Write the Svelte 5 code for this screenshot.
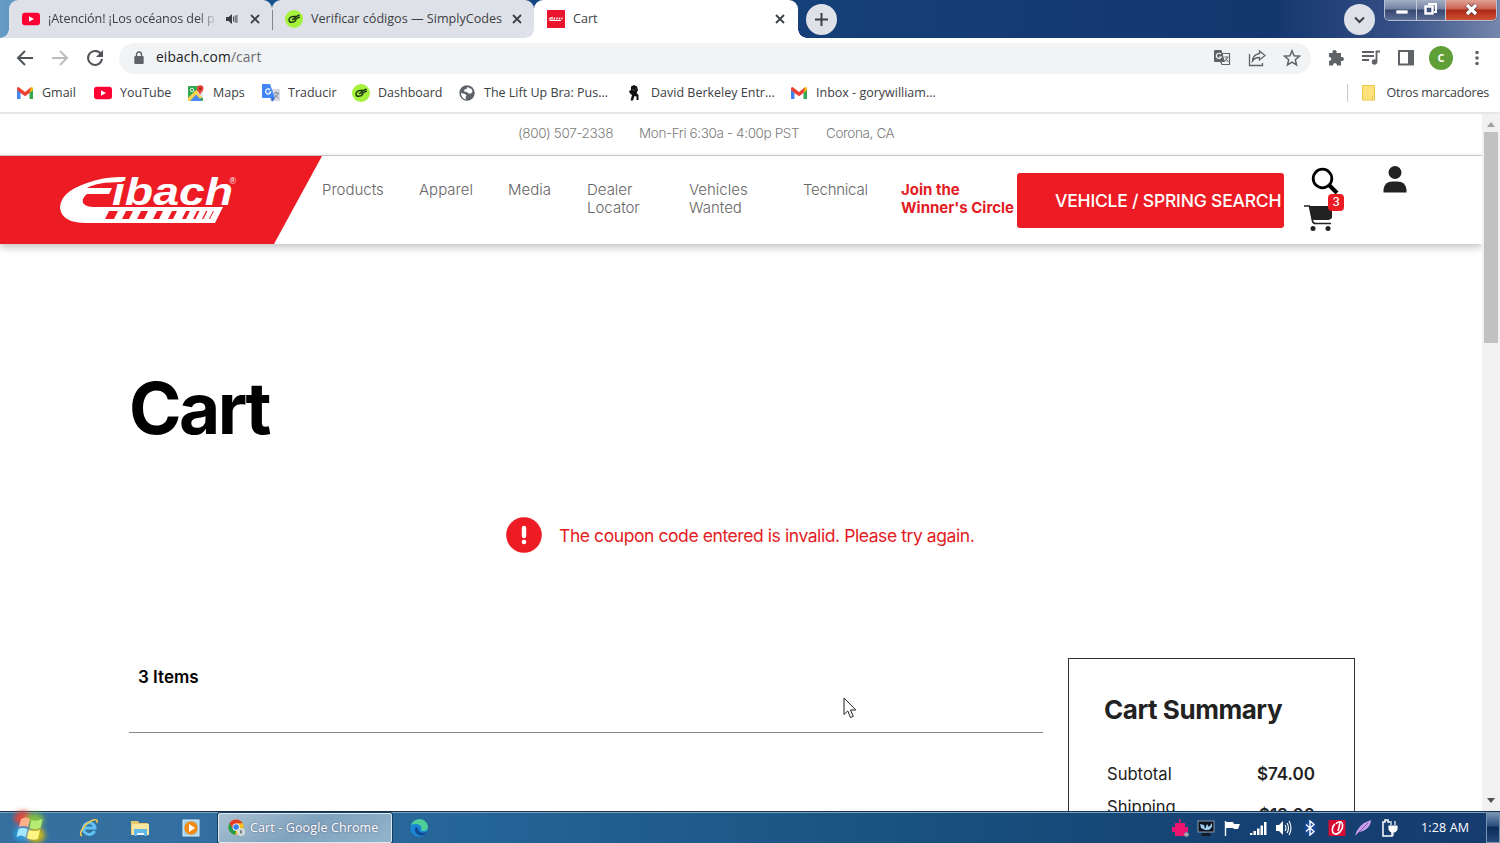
<script>
  const bookmarks = [
    { icon: 'gmail', label: 'Gmail' },
    { icon: 'youtube', label: 'YouTube' },
    { icon: 'maps', label: 'Maps' },
    { icon: 'translate', label: 'Traducir' },
    { icon: 'codes', label: 'Dashboard' },
    { icon: 'globe', label: 'The Lift Up Bra: Pus...' },
    { icon: 'figure', label: 'David Berkeley Entr...' },
    { icon: 'gmail', label: 'Inbox - gorywilliam...' },
  ];

  const navItems = [
    ['Products'],
    ['Apparel'],
    ['Media'],
    ['Dealer', 'Locator'],
    ['Vehicles', 'Wanted'],
    ['Technical'],
    ['Join the', "Winner's Circle"],
  ];

  const totals = [
    { label: 'Subtotal', value: '$74.00' },
    { label: 'Shipping', value: '$18.00' },
  ];
</script>

{#snippet siteIcon(name)}
  <svg class="site-icon" viewBox="0 0 18 18">
    {#if name === 'gmail'}
      <path d="M1 4.5V15h3.5V8z" fill="#4285f4" />
      <path d="M17 4.5V15h-3.500V8z" fill="#34a853" />
      <path d="M13.500 4.500 15 3.200q2-.6 2 1.500V6l-3.500 3z" fill="#fbbc04" />
      <path d="M1 4.700q0-2.100 2-1.500L9 8l6-4.800-1.500 5.800L9 12.300 4.500 9 1 6z" fill="#ea4335" />
    {:else if name === 'youtube'}
      <rect x="0" y="2.700" width="18" height="12.600" rx="3" fill="#f03" />
      <path d="m7 6.200 5 2.800-5 2.800z" fill="#fff" />
    {:else if name === 'maps'}
      <rect x="1" y="2" width="15" height="15" rx="1" fill="#34a853" />
      <path d="m1 14 8-8 7 4v2l-5 5H1z" fill="#fbd34d" />
      <path d="m3 17 6-6.500 6 6.500z" fill="#4a89f3" />
      <path d="m10.500 9 5.500 5.500V6z" fill="#e3e6ea" />
      <circle cx="5" cy="6" r="1.700" fill="none" stroke="#d9f0df" />
      <path d="M13 11c-1-3-3-4-3-6.500a3.200 3.200 0 0 1 6.500 0C16.500 7 14 8 13 11z" fill="#ea4335" />
      <circle cx="13.200" cy="4.500" r="1.200" fill="#8c2b24" />
    {:else if name === 'translate'}
      <rect x="8" y="5" width="10" height="12" fill="#d8dce2" />
      <path d="M0 0h8l5 14H1q-1 0-1-1z" fill="#4285f4" />
      <path d="m9 14 4 0-3 4z" fill="#3367d6" />
      <path d="M8.200 5.800A2.600 2.600 0 1 0 8.800 8H6.500" fill="none" stroke="#fff" stroke-width="1.200" />
      <path d="M12 9h5m-2.500-1.500V9m2 0q-1 3-4 4.500m.5-3 3.500 4" fill="none" stroke="#7b8696" />
    {:else if name === 'codes'}
      <circle cx="9" cy="9" r="9" fill="#a5f23d" />
      <path d="M10.500 6.500C6 6 3.800 8 4 10.300c.3 2.600 4.600 2.600 6.300.5 1-1.200.7-2-.8-2L7.500 9.500M9.500 7.500l4.700-2.300m-2.700 3.500 3-1.500" fill="none" stroke="#1e3311" stroke-width="1.400" stroke-linecap="round" />
    {:else if name === 'globe'}
      <circle cx="9" cy="9" r="7.700" fill="#5f6368" />
      <path d="M9.500 3 8.500 5l-2 .5L6 7.500l3 .5 1.500 1.500H13l1.500-2-1-2.500zM2.800 9l4.200 1 1.500 1.500-1 1.500.5 2.500Q3.500 14.500 2.800 9z" fill="#fff" />
    {:else if name === 'figure'}
      <path d="M6 2.500 9 1l3 1.500 1 3.500-1.500 3 2 2V16h-2v-3.500L9.500 12 8 16.500H5.500L7 11 5 9.500 4 7l2-1z" fill="#111" />
      <path d="m7.500 5.500 2 1m1-2 .8.500" stroke="#888" stroke-width=".8" />
    {/if}
  </svg>
{/snippet}

{#snippet closeIcon()}
  <svg class="close" viewBox="0 0 12 12"><path d="m2 2 8 8M10 2l-8 8" /></svg>
{/snippet}

<div class="desktop">
  <div class="tabstrip">
    <div class="tab first">
      {@render siteIcon('youtube')}
      <span class="title fade">¡Atención! ¡Los océanos del p</span>
      <svg class="audio" viewBox="0 0 12 12"><path d="M0 4h2.500L6 1v10L2.500 8H0z" fill="#3c4043" /><path d="M7.500 3.500v5M9.200 2.500v7M10.900 2v8" stroke="#3c4043" stroke-width=".9" /></svg>
      {@render closeIcon()}
    </div>
    <div class="tab second">
      {@render siteIcon('codes')}
      <span class="title">Verificar códigos — SimplyCodes</span>
      {@render closeIcon()}
    </div>
    <div class="tab active">
      <svg class="site-icon" viewBox="0 0 18 18">
        <rect width="18" height="18" fill="#e8152c" />
        <path d="M2 9.500q1-2 4-2.200M3.500 9h3m-4 1.500H14m-7-1 1-2m1.500 2 .5-1.500h1m1 1.500.5-1.500h1m1 1.500 1-2" fill="none" stroke="#fff" stroke-width="1.100" />
      </svg>
      <span class="title">Cart</span>
      {@render closeIcon()}
    </div>
    <div class="round-btn"><svg viewBox="0 0 31 31"><path d="M15.500 9v13M9 15.500h13" /></svg></div>
    <div class="round-btn search-tabs"><svg viewBox="0 0 31 31"><path d="m11 13.500 4.500 4.500 4.500-4.500" /></svg></div>
    <div class="window-controls">
      <div class="ctl"><svg viewBox="0 0 30 20"><rect x="10" y="10" width="12" height="4" fill="#fff" stroke="#54617f" stroke-width=".8" /></svg></div>
      <div class="ctl mid"><svg viewBox="0 0 26 20"><path d="M10 4h8v8h-2" fill="none" stroke="#fff" stroke-width="2" /><rect x="7.500" y="6.500" width="7" height="7" fill="#40507c" stroke="#fff" stroke-width="2.400" /></svg></div>
      <div class="ctl quit"><svg viewBox="0 0 50 20"><path d="m21 5 9 9m0-9-9 9" stroke="#5d3a40" stroke-width="4.800" /><path d="m21 5 9 9m0-9-9 9" stroke="#fff" stroke-width="3.200" /></svg></div>
    </div>
  </div>

  <div class="toolbar">
    <svg class="nav-icon" viewBox="0 0 18 18"><path d="M17 9H2.500M9 2 2 9l7 7" /></svg>
    <svg class="nav-icon off" viewBox="0 0 18 18"><path d="M1 9h14.500M9 2l7 7-7 7" /></svg>
    <svg class="nav-icon" viewBox="0 0 18 18"><path d="M15 5.200A7 7 0 1 0 16 9.800" /><path d="M17 1v7h-7z" class="solid" /></svg>
    <div class="omnibox">
      <svg class="lock" viewBox="0 0 10 14"><rect x=".3" y="5" width="9.400" height="8" rx="1" fill="#5f6368" /><path d="M2.500 5.500V3.500a2.500 2.500 0 0 1 5 0v2" fill="none" stroke="#5f6368" stroke-width="1.400" /></svg>
      <span class="url">eibach.com<em>/cart</em></span>
      <svg class="box-icon" viewBox="0 0 18 18"><path d="M8 4.500h8.500v11H9L7.500 12.500" stroke-width="1.200" /><path d="M2 1h6.500L12 13H2q-1 0-1-1V2q0-1 1-1z" class="solid" /><path d="M8 5.200A2.600 2.600 0 1 0 8.300 8H6" class="cut" /><path d="M11.500 8h4m-1 0q-.5 2.500-2.500 4.500m.500-3 3 3.500" stroke-width="1" /></svg>
      <svg class="box-icon" viewBox="0 0 18 18"><path d="M1.500 5v11.500h13V14" stroke-width="1.300" /><path d="m11.500 2 5.500 4.500-5.500 4.500V8.500Q7 8.500 4.500 12q.5-6.500 7-7.500z" stroke-width="1.300" /></svg>
      <svg class="box-icon" viewBox="0 0 18 18"><path d="m9 1.800 2.100 4.900 5.200.5-4 3.500 1.200 5.200L9 13.200l-4.500 2.700 1.200-5.200-4-3.500 5.200-.5z" stroke-width="1.500" /></svg>
    </div>
    <div class="actions">
      <svg viewBox="0 0 18 18"><path d="M2 4h3.500Q5 1 7.500 1T9.500 4H14v4q3-.500 3 2t-3 2v4.500h-4q0-2.500-2-2.500t-2 2.500H2V12q2.300 0 2.300-2T2 8z" fill="#5f6368" /></svg>
      <svg viewBox="0 0 18 18"><path d="M0 3h12M0 7h12M0 11h7M14.500 13V2.500H18" fill="none" stroke="#5f6368" stroke-width="1.800" /><circle cx="12.500" cy="13" r="2.700" fill="#5f6368" /></svg>
      <svg viewBox="0 0 18 18"><rect x="2" y="2" width="14" height="13.500" fill="none" stroke="#5f6368" stroke-width="2" /><path d="M11 2h5v13h-5z" fill="#5f6368" /></svg>
      <div class="avatar">c</div>
      <svg viewBox="0 0 18 18" fill="#5f6368"><circle cx="9" cy="3.500" r="1.800" /><circle cx="9" cy="9" r="1.800" /><circle cx="9" cy="14.500" r="1.800" /></svg>
    </div>
  </div>

  <div class="bookmarks">
    <div class="marks">
      {#each bookmarks as mark}
        <div class="mark">
          {@render siteIcon(mark.icon)}
          <span>{mark.label}</span>
        </div>
      {/each}
    </div>
    <div class="other">
      <svg viewBox="0 0 14 16"><path d="M.500.500h12V15H.500z" fill="#ffe27c" stroke="#eec649" /><path d="M10.500 11h2v4h-2z" fill="#fff0b0" stroke="#eec649" /></svg>
      <span>Otros marcadores</span>
    </div>
  </div>

  <div class="viewport">
    <div class="page">
      <div class="contact">
        <span class="phone">(800) 507-2338</span>
        <span class="hours">Mon-Fri 6:30a - 4:00p PST</span>
        <span class="city">Corona, CA</span>
      </div>

      <header>
        <div class="brand">
          <svg viewBox="0 0 180 50">
            <path d="M66 1Q46 0 28 7 1 16 1 32q2 15 26 15h129l8-16H34q-12-1-10-8 1-3 4-5h22l3-6H28Q38 6 63 6z" fill="#fff" />
            <g fill="#ed1c24">
              <path d="M50 35h9l-4 8h-9zM67 35h7l-4 8h-7zM82 35h7l-4 8h-7zM98 35h6l-4 8h-6zM113 35h5l-4 8h-5zM127 35h4l-4 8h-4zM138 35h2.500l-4 8h-2.500zM147 35h1.500l-4 8h-1.500zM154 35h1l-4 8h-1z" />
            </g>
            <text class="wordmark" x="53" y="28.500" textLength="121" lengthAdjust="spacingAndGlyphs">ibach</text>
            <text class="reg" x="170.500" y="7.500">®</text>
          </svg>
        </div>
        <nav>
          {#each navItems as lines}
            <div class="nav-item">
              {#each lines as line}<span>{line}</span>{/each}
            </div>
          {/each}
        </nav>
        <div class="spring-search"><span>VEHICLE / SPRING SEARCH</span></div>
        <div class="tools">
          <svg class="magnifier" viewBox="0 0 28 28"><circle cx="11.500" cy="11.500" r="9.300" fill="none" stroke="#000" stroke-width="2.800" /><path d="m18 18 8 8" stroke="#000" stroke-width="4" /></svg>
          <div class="cart-icon">
            <svg viewBox="0 0 30 28"><path d="M0 2h5.500l3 15q.5 2.500 3 2.500H27" fill="none" stroke="#222" stroke-width="1.600" /><path d="M5 2h23v12l-3 2H8z" fill="#222" /><circle cx="9" cy="24.500" r="2.500" fill="#222" /><circle cx="24" cy="24.500" r="2.500" fill="#222" /></svg>
            <span class="badge">3</span>
          </div>
        </div>
        <svg class="user" viewBox="0 0 24 28"><circle cx="12" cy="7.500" r="6.500" fill="#222" /><path d="M.5 27.500v-3q1-8 9-8h5q8 0 9 8v3z" fill="#222" /></svg>
      </header>

      <main>
        <h1>Cart</h1>
        <div class="alert">
          <svg viewBox="0 0 36 36"><circle cx="18" cy="18" r="17.800" fill="#ed1c24" /><path d="M18 11v8" stroke="#fff" stroke-width="4.400" stroke-linecap="round" /><circle cx="18" cy="25" r="2.300" fill="#fff" /></svg>
          <span>The coupon code entered is invalid. Please try again.</span>
        </div>
        <div class="columns">
          <section class="items"><span>3 Items</span></section>
          <aside>
            <h2>Cart Summary</h2>
            {#each totals as row}
              <div class="row"><span>{row.label}</span><strong>{row.value}</strong></div>
            {/each}
          </aside>
        </div>
      </main>
    </div>
    <div class="scrollbar">
      <div class="arrow up"></div>
      <div class="thumb"></div>
      <div class="arrow down"></div>
    </div>
  </div>

  <div class="taskbar">
    <svg class="start" viewBox="0 0 40 32">
      <defs>
        <filter id="glow" x="-50%" y="-50%" width="200%" height="200%"><feGaussianBlur stdDeviation="2.500" /></filter>
        <filter id="soft"><feGaussianBlur stdDeviation=".600" /></filter>
      </defs>
      <g filter="url(#glow)">
        <ellipse cx="15" cy="6" rx="9" ry="7" fill="#e0483c" /><ellipse cx="27" cy="8" rx="9" ry="7" fill="#7fbd45" />
        <ellipse cx="14" cy="22" rx="8" ry="7" fill="#2fa0df" /><ellipse cx="28" cy="23" rx="9" ry="8" fill="#c8b51f" />
      </g>
      <g filter="url(#soft)">
        <path d="m13 7q5-3 9 0l-2 8q-5-2-9 0z" fill="#ffb18c" /><path d="m23.500 8q4 2 11-1l-2 9q-6 2-11 0z" fill="#b4ec75" />
        <path d="m10.500 17q4-2 9 0l-2 8q-5-3-9 0z" fill="#a4e8ff" /><path d="m21 18q5 2 11 0l-2 9q-6 2-11-1z" fill="#fff584" />
      </g>
    </svg>
    <svg class="pin" viewBox="0 0 20 20"><path d="M15.500 13A5.800 5.800 0 1 1 16 10H6" fill="none" stroke="#62c2f6" stroke-width="3" /><path d="M3 18C-1 17 4 7 12 3c4-2 7-2 6 2" fill="none" stroke="#f1ca4b" stroke-width="1.600" /></svg>
    <svg class="pin" viewBox="0 0 20 20"><path d="M1 3h7l1 2h9v12H1z" fill="#e6c86c" /><path d="M2 6h17v11H2z" fill="#fae79f" /><path d="M4 11h13v7h-3v-3H7v3H4z" fill="#62b9e7" /><path d="M7 15h7v2H7z" fill="#e9f7ff" /></svg>
    <svg class="pin" viewBox="0 0 20 20"><rect x="2" y="2" width="16" height="16" fill="#a7d3ef" stroke="#d7edf9" /><circle cx="10" cy="10" r="6.700" fill="#f28a13" /><path d="m8 6 6 4-6 4z" fill="#fff" /></svg>
    <div class="task">
      <svg viewBox="0 0 20 20">
        <circle cx="9" cy="9" r="8.500" fill="#fbc116" /><path d="M1.600 4.800A8.500 8.500 0 0 1 16.400 4.800H9L5 11z" fill="#e33b2e" /><path d="M1.600 4.800 5.500 11 9 13l-1 4.500A8.500 8.500 0 0 1 1.600 4.800z" fill="#219b4c" />
        <circle cx="9" cy="9" r="4" fill="#fff" /><circle cx="9" cy="9" r="3.100" fill="#347ff0" /><circle cx="14.500" cy="14.500" r="4.500" fill="#d3dadb" /><path d="M14.500 12.500v3.500" stroke="#617277" stroke-width="1.800" />
      </svg>
      <span>Cart - Google Chrome</span>
    </div>
    <svg class="edge" viewBox="0 0 20 20"><circle cx="10" cy="10" r="8.800" fill="#1b86d3" /><path d="M2 7C5-1 18-1 19 9c0 5-7 5-7 2 2-3-3-7-10-4z" fill="#4fcf96" /><path d="M7 9c-3 4 1 10 8 8q2-1 3-3c-5 2-9 0-9-4z" fill="#124a96" /></svg>
    <div class="tray">
      <svg viewBox="0 0 18 18"><path d="M8 0h1.500v4H14v4h3v5h-3v4H4v-4H1V8h3V4h4z" fill="#ed146f" /><circle cx="15.500" cy="15.500" r="2.300" fill="#a5a2a8" /></svg>
      <svg viewBox="0 0 18 18"><rect x="1" y="2" width="16" height="11" fill="#0b1320" stroke="#8b99a8" /><path d="m3 5 4 1 1 4 2-5 2 3 3-4v4l-3 3H8L4 9z" fill="#9fcdeb" /><path d="M5 14h8l1 3H4z" fill="#121c27" /></svg>
      <svg viewBox="0 0 18 18"><path d="M2.500 2v15" stroke="#fff" stroke-width="1.400" /><path d="M3 3h7l1 2h6l-2 5h-4l-1-1H3z" fill="#fff" /></svg>
      <svg viewBox="0 0 18 18" fill="#fff"><path d="M1 14h2.500v2H1zM4.500 12H7v4H4.500zM8 9.500h2.500V16H8zM11.500 6.500H14V16h-2.500zM15 3h2.500v13H15z" /></svg>
      <svg viewBox="0 0 18 18"><path d="M1 6h3l4-4v14l-4-4H1z" fill="#fff" /><path d="M10 6q2 3 0 6m2-8q3 5 0 10m2-12q4 7 0 14" fill="none" stroke="#fff" stroke-width="1.100" /></svg>
      <svg viewBox="0 0 18 18"><ellipse cx="9" cy="9" rx="5.500" ry="8" fill="#164a9f" /><path d="m5 5.500 8 7-4 3.500V2l4 3.500-8 7" fill="none" stroke="#fff" stroke-width="1.400" /></svg>
      <svg viewBox="0 0 18 18"><rect x=".5" y="1" width="17" height="16" fill="#d80b32" /><path d="M7 5C4 7 3 14 7 15c5 1 9-7 7-11-1-2-5-1-6 1m4-1c-1 3-1 5-2 8" fill="none" stroke="#fff" stroke-width="1.600" /></svg>
      <svg viewBox="0 0 18 18"><path d="M1 17Q4 5 17 1q0 6-6 10-4 2-6 2l-4 4z" fill="#c7a0e8" /><path d="M2 16 14 4" stroke="#8055b6" /></svg>
      <svg viewBox="0 0 18 18"><path d="M10 3H8V1H5v2H3v14h9v-4" fill="none" stroke="#fff" stroke-width="1.500" /><path d="M11 2v4m4-4v4M9 7h8v3q-1 3-4 3t-4-3zM13 13v4" fill="#fff" stroke="#fff" stroke-width="1.200" /></svg>
    </div>
    <span class="clock">1:28 AM</span>
    <div class="show-desktop"></div>
  </div>

  <svg class="cursor" viewBox="0 0 14 22"><path d="M1 1v16.500l3.800-3.600L7.500 20.500l2.800-1.200-2.800-6.300h5.300z" fill="#fff" stroke="#222" stroke-width="1" /></svg>
</div>

<style>
  :global(body) { margin: 0; overflow: hidden; background: #fff; }
  .desktop { position: relative; width: 1500px; height: 843px; display: flex; flex-direction: column; overflow: hidden; font-family: "Open Sans", "Noto Sans", sans-serif; font-size: 12.5px; color: #3c4043; }
  svg { display: block; flex: none; }
  .site-icon { width: 18px; height: 18px; }

  .tabstrip { height: 38px; flex: none; display: flex; align-items: center; background: linear-gradient(90deg, #659bc5 0, #17528e 18%, #153f78 55%, #14366f 85%, #344f85 93%, #7587ad 100%); }
  .tab { height: 38px; box-sizing: border-box; display: flex; align-items: center; background: #dee1e8; border-radius: 9px 9px 0 0; white-space: nowrap; position: relative; }
  .first { width: 263px; margin-left: 9px; padding-left: 13px; }
  .first::before { content: ''; position: absolute; left: -9px; bottom: 0; width: 9px; height: 9px; background: radial-gradient(circle at 0 0, transparent 8.500px, #dee1e8 9px); }
  .first::after { content: ''; position: absolute; right: -1px; top: 10px; width: 1px; height: 20px; background: #80868b; z-index: 1; }
  .second { width: 262px; padding-left: 13px; }
  .active { width: 264px; padding-left: 13px; background: #fff; }
  .active::before, .active::after { content: ''; position: absolute; bottom: 0; width: 9px; height: 9px; }
  .active::before { left: -9px; background: radial-gradient(circle at 0 0, transparent 8.500px, #fff 9px); }
  .active::after { right: -9px; background: radial-gradient(circle at 100% 0, transparent 8.500px, #fff 9px); }
  .title { margin-left: 8px; line-height: 18px; font-size: 12.600px; }
  .fade { width: 170px; overflow: hidden; letter-spacing: -.1px; mask-image: linear-gradient(90deg, #000 88%, transparent); }
  .audio { width: 12px; height: 12px; margin-left: 8px; }
  .close { width: 12px; height: 12px; margin-left: auto; margin-right: 11px; }
  .active .close { margin-right: 12px; }
  .close path { stroke: #3c4043; stroke-width: 1.8; }
  .round-btn { width: 31px; height: 31px; border-radius: 50%; background: #dee1e8; margin-left: 8px; }
  .round-btn path { fill: none; stroke: #3c4043; stroke-width: 2; }
  .search-tabs { margin-left: auto; }
  .window-controls { height: 20px; align-self: flex-start; margin: 0 3px 0 9px; display: flex; border: 1px solid #b6c0d4; border-top: 0; border-radius: 0 0 5px 5px; overflow: hidden; box-shadow: 0 0 1px #0a1b3e; }
  .ctl { width: 31px; background: linear-gradient(#a4aec4, #7482a3 45%, #35466f 50%, #5d6e95); }
  .ctl svg { height: 20px; margin: 0 auto; }
  .mid { width: 28px; border: solid #c2cad9; border-width: 0 1px; }
  .quit { width: 50px; background: linear-gradient(#dfa195, #c96252 45%, #ac2814 50%, #cf5031); }

  .toolbar { height: 40px; flex: none; display: flex; align-items: center; padding-left: 16px; background: #fff; }
  .nav-icon { width: 18px; height: 18px; margin-right: 17px; }
  .nav-icon path { fill: none; stroke: #505357; stroke-width: 2; }
  .nav-icon .solid { fill: #505357; stroke: none; }
  .nav-icon.off path { stroke: #bbbdc0; }
  .omnibox { width: 1192px; height: 31px; box-sizing: border-box; border-radius: 16px; background: #f1f3f4; display: flex; align-items: center; padding: 0 10px 0 15px; margin-left: -2px; }
  .lock { width: 10px; height: 14px; }
  .url { font-size: 13.8px; line-height: 18px; padding-bottom: 2px; letter-spacing: .12px; color: #202124; margin: 0 auto 0 12px; }
  .url em { font-style: normal; color: #686c70; }
  .box-icon { width: 18px; height: 18px; margin-left: 17px; }
  .box-icon path { fill: none; stroke: #5f6368; }
  .box-icon .solid { fill: #5f6368; stroke: none; }
  .box-icon .cut { stroke: #f1f3f4; stroke-width: 1.200; }
  .actions { display: flex; align-items: center; gap: 17px; margin-left: 16px; }
  .actions svg { width: 18px; height: 18px; }
  .avatar { width: 24px; height: 24px; margin: 0 -3px; border-radius: 50%; background: #609f37; color: #fff; text-align: center; line-height: 22px; font-size: 14px; font-weight: 600; }
  .actions svg:last-child { margin-left: 1px; }

  .bookmarks { height: 34px; flex: none; display: flex; justify-content: space-between; background: #fff; padding: 0 11px 0 16px; border-bottom: 2px solid #e6e6e7; }
  .marks { display: grid; grid-template-columns: 78px 93px 75px 90px 106px 167px 165px 150px; }
  .mark { display: flex; align-items: center; gap: 8px; white-space: nowrap; height: 30px; }
  .mark span { padding-bottom: 2px; }
  .other { display: flex; align-items: center; height: 18px; margin-top: 6px; padding-left: 14px; gap: 10px; border-left: 1px solid #c6c9cd; white-space: nowrap; }
  .other span { padding-bottom: 2px; letter-spacing: -.2px; }
  .other svg { width: 14px; height: 16px; }

  .viewport { height: 697px; flex: none; display: flex; background: #fff; overflow: hidden; font-family: Inter, sans-serif; }
  .page { width: 1482px; height: 697px; overflow: hidden; }
  .contact { height: 41px; display: flex; align-items: center; border-bottom: 1px solid #cfcfcf; padding-left: 518px; color: #7c7c7c; font-size: 13.5px; white-space: nowrap; font-weight: 300; letter-spacing: -.38px; line-height: 39px; align-items: flex-start; }
  .phone { width: 121px; }
  .hours { width: 187px; }
  header { height: 88px; display: flex; position: relative; box-shadow: 0 3px 8px rgba(0,0,0,.25); }
  .brand { width: 322px; background: #ed1c24; clip-path: polygon(0 0, 100% 0, 274px 100%, 0 100%); }
  .brand svg { width: 180px; height: 50px; margin: 20px 0 0 59px; overflow: visible; }
  .wordmark { font-family: "Liberation Sans", Arial, sans-serif; font-size: 39px; font-weight: bold; font-style: italic; fill: #fff; }
  .reg { font: 9px "Liberation Sans", sans-serif; fill: #fff; }
  nav { display: grid; grid-template-columns: 97px 89px 79px 102px 114px 98px 116px; padding-top: 25px; height: 40px; }
  .nav-item { display: flex; flex-direction: column; font-size: 15px; line-height: 17.500px; font-weight: 300; color: #666; white-space: nowrap; }
  .nav-item:nth-child(6) { letter-spacing: -.25px; }
  .nav-item:last-child { color: #e31b23; font-weight: 700; }
  .spring-search { width: 267px; height: 55px; margin-top: 17px; box-sizing: border-box; border-radius: 3px; background: #ed1c24; color: #fff; font-size: 17.500px; font-weight: 500; letter-spacing: -.2px; line-height: 55px; padding-left: 38px; white-space: nowrap; }
  .tools { width: 42px; margin: 11px 0 0 20px; }
  .magnifier { width: 28px; height: 28px; margin-left: 7px; }
  .cart-icon { position: relative; width: 30px; height: 28px; margin-top: 9px; }
  .cart-icon svg { width: 30px; height: 28px; }
  .badge { position: absolute; left: 24px; top: -10px; width: 16px; height: 17px; border-radius: 4px; background: #ed1c24; color: #fff; font-size: 11.500px; font-weight: 500; line-height: 17px; text-align: center; }
  .user { width: 24px; height: 28px; margin: 9px 0 0 37px; }

  main { padding-left: 129px; }
  h1 { margin: 0; padding-top: 120px; font-size: 71px; line-height: 88px; font-weight: 700; letter-spacing: -2.500px; color: #000; }
  .alert { display: flex; align-items: center; gap: 17px; height: 36px; margin: 65px 0 0 377px; color: #e31b23; font-size: 17.500px; letter-spacing: -.42px; white-space: nowrap; }
  .alert svg { width: 36px; height: 36px; }
  .columns { display: flex; margin-top: 105px; gap: 25px; }
  .items { width: 914px; height: 75px; box-sizing: border-box; border-bottom: 1px solid #888; padding: 8px 0 0 9px; color: #000; font-size: 17px; font-weight: 600; line-height: 22px; }
  aside { width: 287px; height: 250px; box-sizing: border-box; border: 1px solid #333; padding: 33px 39px 0 35px; color: #222; }
  h2 { margin: 0 0 38px; font-size: 26px; line-height: 36px; font-weight: 700; letter-spacing: -.45px; white-space: nowrap; }
  .row { display: flex; justify-content: space-between; padding-left: 3px; font-size: 16.600px; line-height: 16px; height: 33px; }
  .row strong { font-weight: 600; font-size: 17px; }
  .row:last-child strong { padding-top: 8px; }
  .scrollbar { width: 18px; height: 697px; background: #f1f1f1; display: flex; flex-direction: column; align-items: center; }
  .arrow { width: 0; height: 0; border: 4px solid transparent; }
  .up { border-bottom: 5px solid #a0a0a0; border-top: 0; margin: 8px 0 5px; }
  .thumb { width: 14px; height: 211px; background: #c1c1c1; }
  .down { border-top: 5px solid #505050; border-bottom: 0; margin: auto 0 8px; }

  .taskbar { height: 32px; flex: none; box-sizing: border-box; display: flex; align-items: center; background: linear-gradient(90deg, #35709f, #326fa0 14%, #256497 32%, #185280 60%, #154273 82%, #163c6e); border-top: 1px solid #17334f; box-shadow: inset 0 1px #7ba2c0; color: #fff; }
  .start { width: 40px; height: 32px; margin-left: 8px; overflow: visible; }
  .pin { width: 20px; height: 20px; margin-left: 31px; }
  .task { width: 174px; height: 30px; box-sizing: border-box; display: flex; align-items: center; margin-left: 17px; padding-left: 9px; gap: 4px; border: 1px solid #dce9f2; border-radius: 2px; box-shadow: 0 0 0 1px #173c5a; background: linear-gradient(150deg, #a9c1d2, #7fa2bd 50%, #92b4cb); white-space: nowrap; text-shadow: 0 0 2px #557; letter-spacing: .12px; }
  .task svg { width: 18px; height: 18px; }
  .edge { width: 20px; height: 20px; margin-left: 17px; }
  .tray { display: flex; gap: 8.200px; margin-left: auto; }
  .tray svg { width: 18px; height: 18px; }
  .clock { width: 50px; margin-left: 23px; white-space: nowrap; letter-spacing: .15px; }
  .show-desktop { width: 14px; height: 31px; box-sizing: border-box; margin-left: 15px; border: 1px solid #7893b0; background: linear-gradient(#7893b3, #274c7d 45%, #0c2b58 50%, #25497a); }
  .cursor { position: absolute; left: 843px; top: 697px; width: 14px; height: 22px; }
</style>
